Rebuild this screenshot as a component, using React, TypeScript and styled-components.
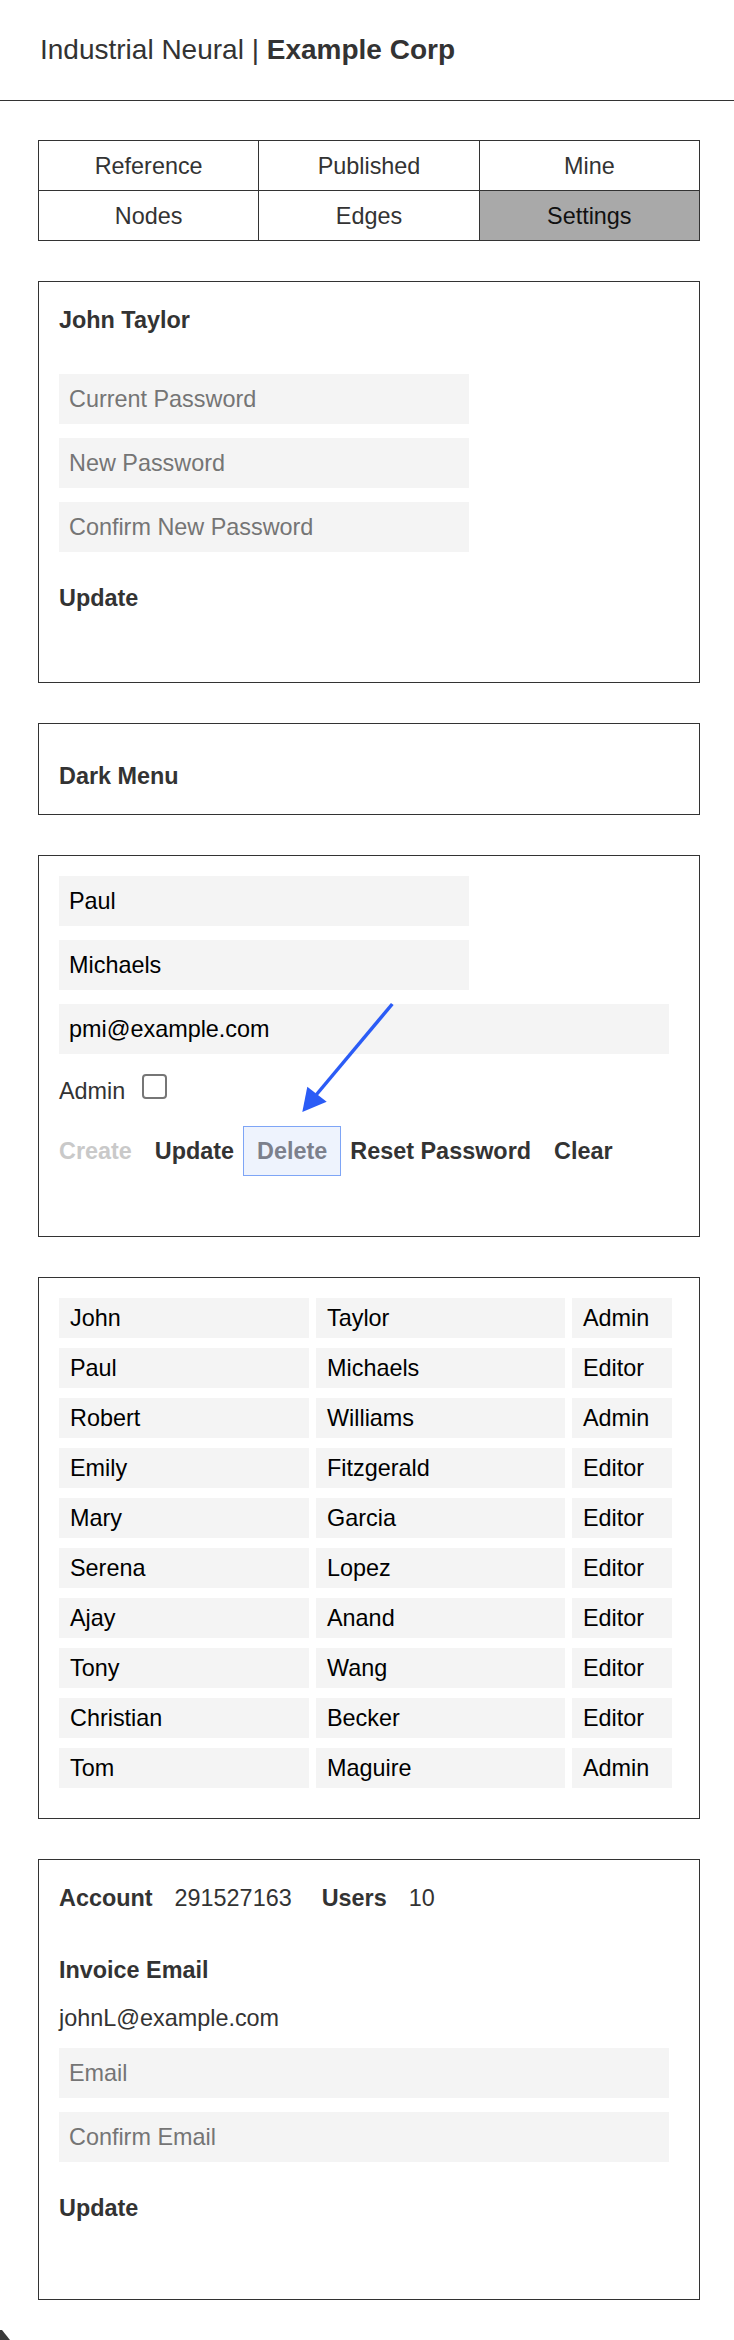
import React from "react";
import styled, { createGlobalStyle } from "styled-components";

const GlobalStyle = createGlobalStyle`
  body {
    margin: 0;
    background: #ffffff;
    font-family: "Liberation Sans", Arial, Helvetica, sans-serif;
  }
`;

const Page = styled.div`
  position: relative;
  min-height: 2340px;
  color: #333;
  font-size: 23.4px;
  line-height: 28px;
`;

const Header = styled.header`
  height: 100px;
  display: flex;
  align-items: center;
  padding-left: 40px;
  border-bottom: 1px solid #333;
  font-size: 28px;
  line-height: 34px;
  color: #333;
`;

const Brand = styled.span`
  font-weight: bold;
`;

const Main = styled.main`
  display: flex;
  flex-direction: column;
  gap: 40px;
  padding: 39px 34px 39px 38px;
`;

const TabGrid = styled.nav`
  display: grid;
  grid-template-columns: repeat(3, 1fr);
  width: 661px;
  border-top: 1px solid #333;
  border-left: 1px solid #333;
`;

const Tab = styled.div<{ $active?: boolean }>`
  height: 49px;
  display: flex;
  align-items: center;
  justify-content: center;
  border-right: 1px solid #333;
  border-bottom: 1px solid #333;
  background: ${(p) => (p.$active ? "#a9a9a9" : "#ffffff")};
  color: ${(p) => (p.$active ? "#111" : "#333")};
`;

const Card = styled.section<{ $pt: number; $pb: number }>`
  position: relative;
  border: 1px solid #333;
  padding: ${(p) => p.$pt}px 20px ${(p) => p.$pb}px 20px;
`;

const Title = styled.div<{ $mt?: number }>`
  font-weight: bold;
  color: #333;
  margin-top: ${(p) => p.$mt || 0}px;
`;

const Plain = styled.div<{ $mt?: number }>`
  color: #333;
  margin-top: ${(p) => p.$mt || 0}px;
`;

const Fields = styled.div<{ $mt?: number }>`
  display: flex;
  flex-direction: column;
  gap: 14px;
  margin-top: ${(p) => p.$mt || 0}px;
`;

const Field = styled.input<{ $wide?: boolean }>`
  display: block;
  box-sizing: border-box;
  width: ${(p) => (p.$wide ? "610px" : "410px")};
  height: 50px;
  padding: 0 10px;
  border: none;
  outline: none;
  background: #f4f4f4;
  font-family: inherit;
  font-size: 23.4px;
  color: #000;

  &::placeholder {
    color: #757575;
  }
`;

const AdminRow = styled.label`
  display: flex;
  align-items: flex-start;
  margin-top: 20px;
  color: #333;
`;

const AdminText = styled.span`
  padding-top: 3px;
  margin-right: 17px;
`;

const Check = styled.input`
  appearance: none;
  box-sizing: border-box;
  width: 25px;
  height: 25px;
  margin: 0;
  border: 2px solid #767676;
  border-radius: 4px;
  background: #fff;
`;

const ButtonRow = styled.div`
  display: flex;
  align-items: center;
  gap: 23px;
  height: 50px;
  margin-top: 21px;
`;

const Action = styled.button<{ $muted?: boolean }>`
  padding: 0;
  border: none;
  background: none;
  font-family: inherit;
  font-size: 23.4px;
  line-height: 28px;
  font-weight: bold;
  color: ${(p) => (p.$muted ? "#c9c9c9" : "#333")};
`;

const HighlightAction = styled(Action)`
  box-sizing: border-box;
  height: 50px;
  margin: 0 -14px;
  padding: 0 13px;
  border: 1px solid #7ea5f6;
  background: #eef3fd;
  color: #7c808c;
`;

const Arrow = styled.svg`
  position: absolute;
  left: 254px;
  top: 139px;
  overflow: visible;
`;

const UserGrid = styled.div`
  display: grid;
  grid-template-columns: 250px 249px 100px;
  column-gap: 7px;
  row-gap: 10px;
`;

const Cell = styled.div`
  height: 40px;
  line-height: 40px;
  padding-left: 11px;
  background: #f4f4f4;
  color: #000;
`;

const StatLine = styled.div`
  display: flex;
  color: #333;
`;

const StatLabel = styled.span`
  font-weight: bold;
  margin-right: 22px;
`;

const StatValue = styled.span`
  margin-right: 30px;
`;

const CornerMark = styled.svg`
  position: absolute;
  left: 0;
  bottom: 0;
`;

const tabs = ["Reference", "Published", "Mine", "Nodes", "Edges", "Settings"];

const users = [
  ["John", "Taylor", "Admin"],
  ["Paul", "Michaels", "Editor"],
  ["Robert", "Williams", "Admin"],
  ["Emily", "Fitzgerald", "Editor"],
  ["Mary", "Garcia", "Editor"],
  ["Serena", "Lopez", "Editor"],
  ["Ajay", "Anand", "Editor"],
  ["Tony", "Wang", "Editor"],
  ["Christian", "Becker", "Editor"],
  ["Tom", "Maguire", "Admin"],
];

const App = () => {
  return (
    <Page>
      <GlobalStyle />
      <Header>
        Industrial Neural |&nbsp;<Brand>Example Corp</Brand>
      </Header>
      <Main>
        <TabGrid>
          {tabs.map((t) => (
            <Tab key={t} $active={t === "Settings"}>
              {t}
            </Tab>
          ))}
        </TabGrid>

        <Card $pt={24} $pb={70}>
          <Title>John Taylor</Title>
          <Fields $mt={40}>
            <Field type="password" placeholder="Current Password" />
            <Field type="password" placeholder="New Password" />
            <Field type="password" placeholder="Confirm New Password" />
          </Fields>
          <Title $mt={32}>Update</Title>
        </Card>

        <Card $pt={38} $pb={24}>
          <Title>Dark Menu</Title>
        </Card>

        <Card $pt={20} $pb={60}>
          <Fields>
            <Field defaultValue="Paul" />
            <Field defaultValue="Michaels" />
            <Field $wide defaultValue="pmi@example.com" />
          </Fields>
          <AdminRow>
            <AdminText>Admin</AdminText>
            <Check type="checkbox" />
          </AdminRow>
          <ButtonRow>
            <Action $muted>Create</Action>
            <Action>Update</Action>
            <HighlightAction>Delete</HighlightAction>
            <Action>Reset Password</Action>
            <Action>Clear</Action>
          </ButtonRow>
          <Arrow width="110" height="125" viewBox="0 0 110 125">
            <line
              x1="99.3"
              y1="9"
              x2="23.5"
              y2="99.5"
              stroke="#2b5cf6"
              strokeWidth="3.5"
            />
            <polygon points="9.3,117 14.3,91.7 33.7,106.7" fill="#2b5cf6" />
          </Arrow>
        </Card>

        <Card $pt={20} $pb={30}>
          <UserGrid>
            {users.map((u) =>
              u.map((v, i) => <Cell key={u[0] + i}>{v}</Cell>)
            )}
          </UserGrid>
        </Card>

        <Card $pt={24} $pb={77}>
          <StatLine>
            <StatLabel>Account</StatLabel>
            <StatValue>291527163</StatValue>
            <StatLabel>Users</StatLabel>
            <StatValue>10</StatValue>
          </StatLine>
          <Title $mt={44}>Invoice Email</Title>
          <Plain $mt={19.5}>johnL@example.com</Plain>
          <Fields $mt={16.5}>
            <Field $wide placeholder="Email" />
            <Field $wide placeholder="Confirm Email" />
          </Fields>
          <Title $mt={32}>Update</Title>
        </Card>
      </Main>
      <CornerMark width="12" height="12" viewBox="0 0 12 12">
        <polygon points="0,2 2,2 10,12 0,12" fill="#3a3a3a" />
      </CornerMark>
    </Page>
  );
};

export default App;
